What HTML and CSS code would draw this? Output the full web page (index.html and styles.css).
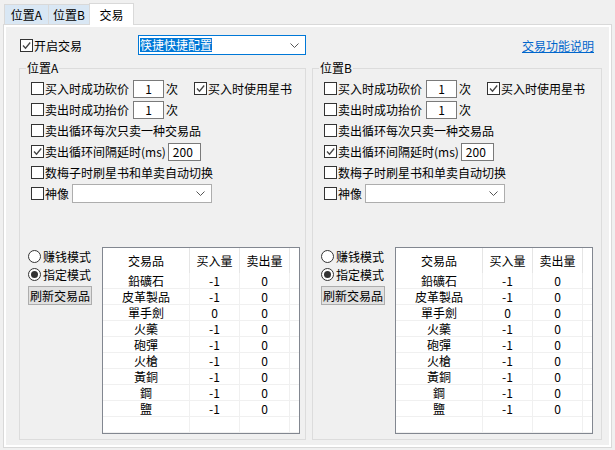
FILE: index.html
```html
<!DOCTYPE html>
<html lang="zh-CN">
<head>
<meta charset="UTF-8">
<title>交易</title>
<link rel="stylesheet" href="styles.css">
</head>
<body>

<!-- Tab header -->
<div class="tabs">
  <div class="tab tab-a">位置A</div>
  <div class="tab tab-b">位置B</div>
  <div class="tab active">交易</div>
</div>

<div class="page">
  <div class="sheet">

    <div class="toprow">
      <label class="check main"><span class="box"><svg viewBox="0 0 11 11"><polyline points="2,5.5 4.5,8.2 9.2,2.5"/></svg></span>开启交易</label>
      <div class="combo focus"><span class="sel">筷捷快捷配置</span><svg class="arrow" viewBox="0 0 9 5"><polyline points="0.5,0.5 4.5,4.5 8.5,0.5"/></svg></div>
      <a class="help" href="#">交易功能说明</a>
    </div>

    <div class="groups">

      <!-- Position A -->
      <div class="group">
        <span class="legend">位置A</span>
        <div class="row">
          <label class="check"><span class="box"></span>买入时成功砍价</label>
          <span class="num">1</span><span class="unit">次</span>
          <label class="check star"><span class="box"><svg viewBox="0 0 11 11"><polyline points="2,5.5 4.5,8.2 9.2,2.5"/></svg></span>买入时使用星书</label>
        </div>
        <div class="row">
          <label class="check"><span class="box"></span>卖出时成功抬价</label>
          <span class="num">1</span><span class="unit">次</span>
        </div>
        <div class="row">
          <label class="check"><span class="box"></span>卖出循环每次只卖一种交易品</label>
        </div>
        <div class="row">
          <label class="check"><span class="box"><svg viewBox="0 0 11 11"><polyline points="2,5.5 4.5,8.2 9.2,2.5"/></svg></span>卖出循环间隔延时(ms)</label>
          <span class="num wide">200</span>
        </div>
        <div class="row">
          <label class="check"><span class="box"></span>数梅子时刷星书和单卖自动切换</label>
        </div>
        <div class="row">
          <label class="check"><span class="box"></span>神像</label>
          <div class="combo small"><svg class="arrow" viewBox="0 0 9 5"><polyline points="0.5,0.5 4.5,4.5 8.5,0.5"/></svg></div>
        </div>

        <div class="bottom">
          <div class="modes">
            <div class="radio"><span class="dot"></span>赚钱模式</div>
            <div class="radio on"><span class="dot"></span>指定模式</div>
            <button class="refresh">刷新交易品</button>
          </div>
          <div class="gridbox">
            <table>
              <colgroup><col class="c-name"><col class="c-num"><col class="c-num"><col class="c-pad"></colgroup>
              <tr><th>交易品</th><th>买入量</th><th>卖出量</th><th></th></tr>
              <tr><td>鉛礦石</td><td>-1</td><td>0</td><td></td></tr>
              <tr><td>皮革製品</td><td>-1</td><td>0</td><td></td></tr>
              <tr><td>單手劍</td><td>0</td><td>0</td><td></td></tr>
              <tr><td>火藥</td><td>-1</td><td>0</td><td></td></tr>
              <tr><td>砲彈</td><td>-1</td><td>0</td><td></td></tr>
              <tr><td>火槍</td><td>-1</td><td>0</td><td></td></tr>
              <tr><td>黃銅</td><td>-1</td><td>0</td><td></td></tr>
              <tr><td>鋼</td><td>-1</td><td>0</td><td></td></tr>
              <tr><td>鹽</td><td>-1</td><td>0</td><td></td></tr>
              <tr><td></td><td></td><td></td><td></td></tr>
            </table>
          </div>
        </div>
      </div>

      <!-- Position B -->
      <div class="group">
        <span class="legend">位置B</span>
        <div class="row">
          <label class="check"><span class="box"></span>买入时成功砍价</label>
          <span class="num">1</span><span class="unit">次</span>
          <label class="check star"><span class="box"><svg viewBox="0 0 11 11"><polyline points="2,5.5 4.5,8.2 9.2,2.5"/></svg></span>买入时使用星书</label>
        </div>
        <div class="row">
          <label class="check"><span class="box"></span>卖出时成功抬价</label>
          <span class="num">1</span><span class="unit">次</span>
        </div>
        <div class="row">
          <label class="check"><span class="box"></span>卖出循环每次只卖一种交易品</label>
        </div>
        <div class="row">
          <label class="check"><span class="box"><svg viewBox="0 0 11 11"><polyline points="2,5.5 4.5,8.2 9.2,2.5"/></svg></span>卖出循环间隔延时(ms)</label>
          <span class="num wide">200</span>
        </div>
        <div class="row">
          <label class="check"><span class="box"></span>数梅子时刷星书和单卖自动切换</label>
        </div>
        <div class="row">
          <label class="check"><span class="box"></span>神像</label>
          <div class="combo small"><svg class="arrow" viewBox="0 0 9 5"><polyline points="0.5,0.5 4.5,4.5 8.5,0.5"/></svg></div>
        </div>

        <div class="bottom">
          <div class="modes">
            <div class="radio"><span class="dot"></span>赚钱模式</div>
            <div class="radio on"><span class="dot"></span>指定模式</div>
            <button class="refresh">刷新交易品</button>
          </div>
          <div class="gridbox">
            <table>
              <colgroup><col class="c-name"><col class="c-num"><col class="c-num"><col class="c-pad"></colgroup>
              <tr><th>交易品</th><th>买入量</th><th>卖出量</th><th></th></tr>
              <tr><td>鉛礦石</td><td>-1</td><td>0</td><td></td></tr>
              <tr><td>皮革製品</td><td>-1</td><td>0</td><td></td></tr>
              <tr><td>單手劍</td><td>0</td><td>0</td><td></td></tr>
              <tr><td>火藥</td><td>-1</td><td>0</td><td></td></tr>
              <tr><td>砲彈</td><td>-1</td><td>0</td><td></td></tr>
              <tr><td>火槍</td><td>-1</td><td>0</td><td></td></tr>
              <tr><td>黃銅</td><td>-1</td><td>0</td><td></td></tr>
              <tr><td>鋼</td><td>-1</td><td>0</td><td></td></tr>
              <tr><td>鹽</td><td>-1</td><td>0</td><td></td></tr>
              <tr><td></td><td></td><td></td><td></td></tr>
            </table>
          </div>
        </div>
      </div>

    </div>
  </div>
</div>

</body>
</html>
```

FILE: styles.css
```css
/* Base */
body {
  margin: 0;
  background-color: #f0f0f0;
  font-family: "Noto Sans CJK SC", "Noto Sans", sans-serif;
  font-size: 12px;
  color: #000;
}

/* Tabs */
.tabs {
  display: flex;
  align-items: flex-end;
  height: 24px;
  padding-left: 4px;
}

.tab {
  box-sizing: border-box;
  height: 20px;
  line-height: 19px;
  text-align: center;
  border: 1px solid #d9d9d9;
  border-bottom: none;
  border-right: none;
  background-color: #d9e7f4;
}

.tab-a { width: 44px; }
.tab-b { width: 41px; }

.tab.active {
  position: relative;
  top: 1px;
  z-index: 1;
  width: 45px;
  height: 22px;
  line-height: 21px;
  background-color: #fff;
  border-right: 1px solid #d9d9d9;
}

/* Page */
.page {
  box-sizing: border-box;
  margin-left: 3px;
  width: 609px;
  height: 424px;
  border: 1px solid #d9d9d9;
  background-color: #fff;
  padding: 2px;
}

.sheet {
  box-sizing: border-box;
  height: 100%;
  padding: 8px 0 0 13px;
  background-color: #f0f0f0;
}

/* Top row */
.toprow {
  display: flex;
  align-items: center;
  height: 20px;
  padding-left: 1px;
}

.check {
  display: flex;
  align-items: center;
  white-space: nowrap;
}

.check.main {
  width: 118px;
}

.box {
  box-sizing: border-box;
  width: 13px;
  height: 13px;
  margin-right: 1px;
  border: 1px solid #333;
  background-color: #fff;
}

.box svg {
  display: block;
  width: 11px;
  height: 11px;
}

.box polyline {
  fill: none;
  stroke: #444;
  stroke-width: 1.3;
}

.combo {
  box-sizing: border-box;
  display: flex;
  align-items: center;
  border: 1px solid #7a7a7a;
  background-color: #fff;
}

.combo.focus {
  width: 168px;
  height: 20px;
  padding: 0 6px 0 1px;
  border-color: #0078d7;
}

.combo .sel {
  line-height: 14px;
  background-color: #0078d7;
  color: #fff;
}

.combo .arrow {
  width: 9px;
  height: 5px;
  margin-left: auto;
}

.combo .arrow polyline {
  fill: none;
  stroke: #555;
  stroke-width: 1;
}

.help {
  margin-left: auto;
  margin-right: 15px;
  color: #0066cc;
  text-decoration: underline;
}

/* Group boxes */
.groups {
  display: grid;
  grid-template-columns: 287px 290px;
  column-gap: 6px;
  margin-top: 13px;
}

.group {
  position: relative;
  box-sizing: border-box;
  height: 372px;
  border: 1px solid #dcdcdc;
  padding: 9px 0 0 8px;
}

.legend {
  position: absolute;
  top: -8px;
  left: 6px;
  padding: 0 1px;
  line-height: 14px;
  background-color: #f0f0f0;
}

.row {
  display: flex;
  align-items: center;
  height: 21px;
  padding-left: 3px;
}

.num {
  box-sizing: border-box;
  width: 31px;
  height: 18px;
  margin-left: 4px;
  border: 1px solid #7a7a7a;
  background-color: #fff;
  text-align: center;
  line-height: 16px;
}

.num.wide {
  width: 33px;
  margin-left: 2px;
  padding-left: 4px;
  text-align: left;
}

.unit {
  margin-left: 2px;
}

.check.star {
  margin-left: 16px;
}

.combo.small {
  width: 140px;
  height: 19px;
  margin-left: 3px;
  padding-right: 6px;
  border-color: #adadad;
}

/* Mode switch + item list */
.bottom {
  display: flex;
  margin-top: 43px;
}

.modes {
  width: 74px;
}

.radio {
  display: flex;
  align-items: center;
  height: 18px;
}

.dot {
  box-sizing: border-box;
  display: flex;
  align-items: center;
  justify-content: center;
  width: 13px;
  height: 13px;
  margin-right: 2px;
  border: 1px solid #333;
  border-radius: 50%;
  background-color: #fff;
}

.radio.on .dot::after {
  content: "";
  width: 7px;
  height: 7px;
  border-radius: 50%;
  background-color: #333;
}

.refresh {
  box-sizing: border-box;
  width: 64px;
  height: 19px;
  margin-top: 3px;
  padding: 0;
  border: 1px solid #adadad;
  background-color: #e1e1e1;
  font-family: inherit;
  font-size: 12px;
  line-height: 16px;
  color: #000;
}

.gridbox {
  box-sizing: border-box;
  width: 198px;
  height: 187px;
  border: 1px solid #828790;
  background-color: #fff;
  overflow: hidden;
}

.gridbox table {
  width: 196px;
  table-layout: fixed;
  border-collapse: separate;
  border-spacing: 0;
}

.c-name { width: 87px; }
.c-num { width: 50px; }
.c-pad { width: 9px; }

.gridbox th {
  box-sizing: border-box;
  height: 25px;
  padding: 0;
  font-weight: normal;
  border-right: 1px solid #e5e5e5;
  line-height: 24px;
}

.gridbox td {
  box-sizing: border-box;
  height: 16px;
  padding: 0;
  text-align: center;
  line-height: 15px;
  border-right: 1px solid #f0f0f0;
  border-bottom: 1px solid #f0f0f0;
}

.gridbox th:last-child,
.gridbox td:last-child {
  border-right: none;
}
```
